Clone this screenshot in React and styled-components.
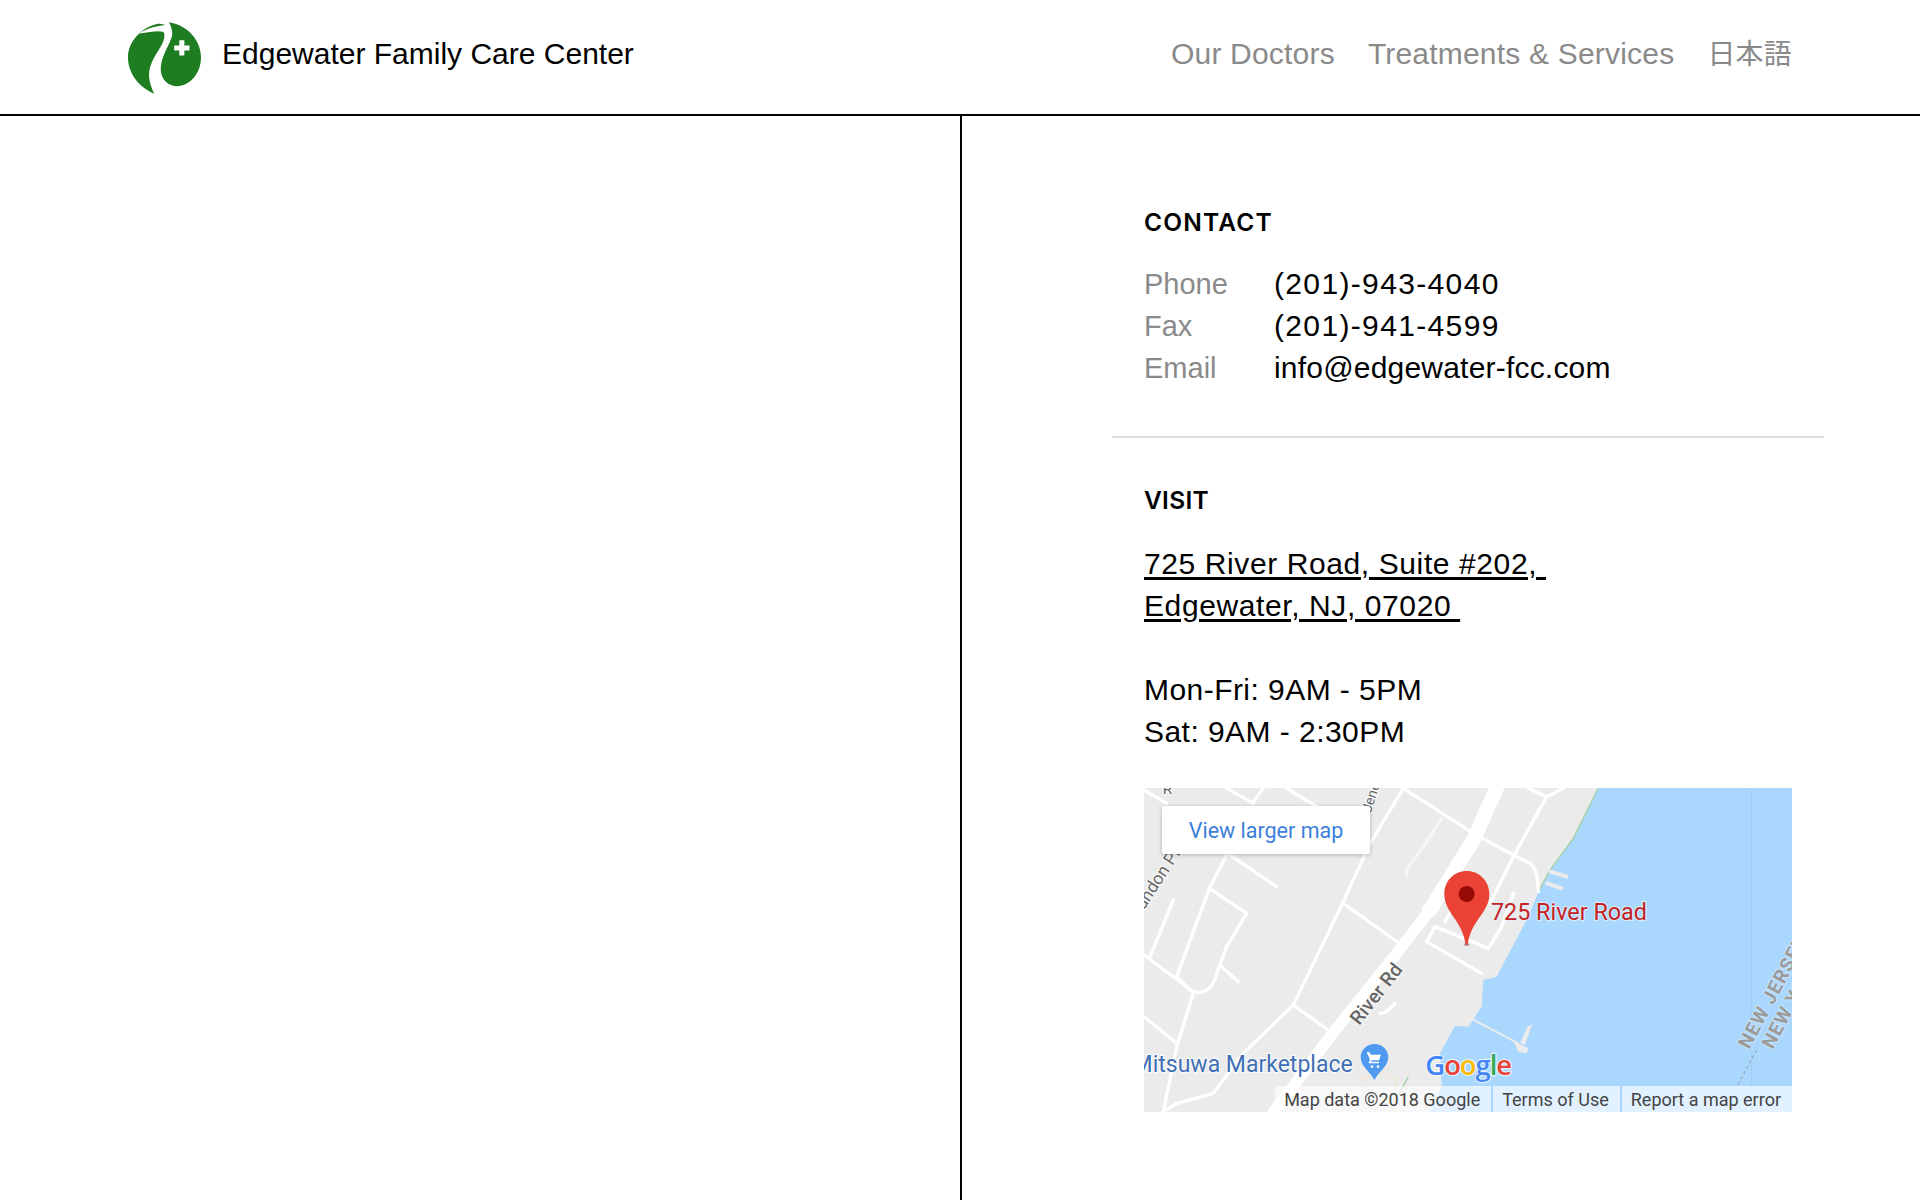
import React from "react";
import styled, { createGlobalStyle } from "styled-components";

const GlobalStyle = createGlobalStyle`
  html, body {
    margin: 0;
    padding: 0;
    background: #fff;
  }
  body {
    font-family: "Liberation Sans", "Noto Sans CJK JP", sans-serif;
    color: #000;
  }
`;

const Logo = () => (
  <LogoMark viewBox="25 22 215 210">
    <path
      fill="#1e7d20"
      d="M112 26C62 38 25 80 25 125C25 175 60 215 102 232C88 200 80 175 95 140C110 105 135 85 132 55C130 44 100 48 58 55C75 42 105 34 135 30C128 27 120 26 112 26Z"
    />
    <path
      fill="#1e7d20"
      d="M145 22C200 30 240 75 240 125C240 175 205 210 170 210C135 210 118 180 122 150C126 115 150 85 155 60C157 45 150 30 145 22Z"
    />
    <path fill="#fff" d="M176 75h15v15h15v15h-15v15h-15v-15h-15v-15h15z" />
  </LogoMark>
);

const MapRoad = styled.path`
  fill: none;
  stroke: ${(p) => p.$color || "#fff"};
  stroke-width: ${(p) => p.$w || 10};
  stroke-linejoin: round;
  stroke-linecap: round;
`;

const MapLabel = styled.text`
  font-family: Roboto, "Liberation Sans", sans-serif;
  font-size: ${(p) => p.$size || 45}px;
  font-weight: ${(p) => p.$weight || 400};
  letter-spacing: ${(p) => p.$spacing || 0}px;
  fill: ${(p) => p.$color || "#666"};
  stroke: ${(p) => p.$halo || "#fff"};
  stroke-width: 7px;
  stroke-opacity: 0.75;
  stroke-linejoin: round;
  paint-order: stroke;
`;

const GoogleLabel = styled.text`
  font-family: "Open Sans", Roboto, sans-serif;
  font-size: 82px;
  font-weight: 600;
  letter-spacing: -3px;
  stroke: #fff;
  stroke-opacity: 0.7;
  stroke-width: 7px;
  stroke-linejoin: round;
  paint-order: stroke;
`;

const roads = [
  "M42 60L110 100",
  "M290 55L370 100",
  "M370 95L400 55",
  "M470 55L560 110",
  "M820 55L1030 190L1150 255L1200 280C1215 290 1222 310 1225 365",
  "M820 55L720 220L640 395L490 705L340 850L250 970L140 1000L100 1025",
  "M640 400L815 525",
  "M490 705L615 795",
  "M300 255L440 350",
  "M290 255L240 350L140 620L190 670L140 830L100 1025",
  "M245 360L350 430L290 530L260 610C250 650 230 675 190 665L42 555",
  "M130 390L60 560",
  "M275 590L325 635",
  "M42 740L140 820",
  "M1195 55L1250 80L1300 55",
  "M1250 80L1150 260L1080 400",
  "M1075 535L915 470",
  "M1075 535L1115 470L1150 370",
  "M890 515L1055 610",
  "M890 515L915 470",
  "M880 415L905 400",
  "M945 455L970 410",
  "M750 730C770 730 780 715 795 700",
];

const CompanyMap = () => (
  <MapFrame>
    <MapArt viewBox="42 54 1944 972" preserveAspectRatio="none">
      <rect x="42" y="54" width="1944" height="972" fill="#ebebeb" />
      <path
        fill="#a9d7fe"
        d="M1405 54L1330 205L1260 300L1225 365L1195 440L1100 620L1060 630L1055 710L1015 770L975 768L930 850L935 950L900 1026L1986 1026L1986 54Z"
      />
      <path fill="none" stroke="#a5d0a5" strokeWidth="4" d="M1405 54L1330 205L1260 300L1225 365" />
      <path fill="none" stroke="#a5d0a5" strokeWidth="4" d="M835 920L800 985" />
      <path fill="none" stroke="#f1e6d8" strokeWidth="5" d="M690 930L760 905L800 930L790 1000" />
      {roads.map((d, index) => (
        <MapRoad key={index} d={d} />
      ))}
      <MapRoad d="M935 145L880 230L835 290L830 315" $color="#f6f6f6" />
      <MapRoad d="M1100 54L1030 210L900 420" $w={44} />
      <MapRoad d="M900 420L800 550L600 800L490 950L430 1026" $w={34} />
      <MapRoad d="M1262 305L1310 320M1252 340L1295 355" $color="#ebebeb" $w={12} />
      <MapRoad d="M1028 748L1165 820" $color="#ebebeb" $w={6} />
      <path fill="#ebebeb" d="M1150 812L1195 835L1190 850L1165 845ZM1170 820L1192 770L1207 762L1185 825Z" />
      <path fill="none" stroke="#9ec8ee" strokeWidth="2" d="M1865 54V1026" />
      <path fill="none" stroke="#9a9a9a" strokeWidth="3" strokeDasharray="10 8" d="M1880 840L1820 950" />
      <MapLabel x="1858" y="840" $size={58} $weight={700} $color="#9b9b9b" $spacing={3} transform="rotate(-62 1858 840)" $halo="#cfe6fb">
        NEW JERSEY
      </MapLabel>
      <MapLabel x="1928" y="840" $size={58} $weight={700} $color="#9b9b9b" $spacing={3} transform="rotate(-62 1928 840)" $halo="#cfe6fb">
        NEW YORK
      </MapLabel>
      <MapLabel x="98" y="72" $size={46}>R</MapLabel>
      <MapLabel x="15" y="462" $size={52} transform="rotate(-57 15 462)">
        Brandon Pl
      </MapLabel>
      <MapLabel x="722" y="130" $size={42} transform="rotate(-72 722 130)">
        Jene
      </MapLabel>
      <MapLabel x="688" y="768" $size={58} $weight={500} transform="rotate(-52 688 768)">
        River Rd
      </MapLabel>
      <MapLabel x="668" y="905" $size={69} $color="#3f6fb5" textAnchor="end">
        Mitsuwa Marketplace
      </MapLabel>
      <path
        fill="#4e9af1"
        d="M733 822C760 822 775 842 775 862C775 890 745 905 733 930C721 905 692 890 692 862C692 842 708 822 733 822Z"
      />
      <path
        fill="#fff"
        d="M711 847h8l3 7h31l-6 17h-22l-2 4h24v5h-32l5-10l-7-18h-2zM726 886a4 4 0 1 0 .1 0zM744 886a4 4 0 1 0 .1 0z"
      />
      <GoogleLabel x="886" y="915">
        <tspan fill="#4285f4">G</tspan>
        <tspan fill="#ea4335">o</tspan>
        <tspan fill="#fbbc05">o</tspan>
        <tspan fill="#4285f4">g</tspan>
        <tspan fill="#34a853">l</tspan>
        <tspan fill="#ea4335">e</tspan>
      </GoogleLabel>
      <ellipse cx="1010" cy="524" rx="9" ry="4" fill="#777" opacity="0.6" />
      <path
        fill="#ea4335"
        d="M1010 303C1048 303 1078 333 1078 372C1078 430 1022 450 1013 525H1007C998 450 943 430 943 372C943 333 972 303 1010 303Z"
      />
      <circle cx="1010" cy="372" r="24" fill="#960a05" />
      <MapLabel x="1083" y="449" $size={70} $color="#c5221f" $halo="#e3f1fe">
        725 River Road
      </MapLabel>
    </MapArt>
    <LargerMapCard>View larger map</LargerMapCard>
    <Attribution>
      <AttributionCell>Map data ©2018 Google</AttributionCell>
      <AttributionCell>Terms of Use</AttributionCell>
      <AttributionCell>Report a map error</AttributionCell>
    </Attribution>
  </MapFrame>
);

const App = () => (
  <Page>
    <GlobalStyle />
    <Header>
      <Brand>
        <Logo />
        <BrandName>Edgewater Family Care Center</BrandName>
      </Brand>
      <Nav>
        <NavLink>Our Doctors</NavLink>
        <NavLink>Treatments &amp; Services</NavLink>
        <NavLink $cjk>日本語</NavLink>
      </Nav>
    </Header>
    <Main>
      <Blank />
      <Details>
        <ContactSection>
          <Heading $spacing={1.2}>CONTACT</Heading>
          <ContactGrid>
            <ContactKey>Phone</ContactKey>
            <ContactValue $spacing={1.35}>(201)-943-4040</ContactValue>
            <ContactKey>Fax</ContactKey>
            <ContactValue $spacing={1.35}>(201)-941-4599</ContactValue>
            <ContactKey>Email</ContactKey>
            <ContactValue $spacing={0.2}>info@edgewater-fcc.com</ContactValue>
          </ContactGrid>
        </ContactSection>
        <VisitSection>
          <Heading $spacing={0.3}>VISIT</Heading>
          <Address>
            725 River Road, Suite #202,&nbsp;
            <br />
            Edgewater, NJ, 07020&nbsp;
          </Address>
          <Hours>
            Mon-Fri: 9AM - 5PM
            <br />
            Sat: 9AM - 2:30PM
          </Hours>
          <CompanyMap />
        </VisitSection>
      </Details>
    </Main>
  </Page>
);

const Page = styled.div`
  min-height: 100vh;
  display: flex;
  flex-direction: column;
  overflow: hidden;
`;

const Header = styled.header`
  height: 114px;
  box-sizing: content-box;
  border-bottom: 2px solid #000;
  padding: 0 128px;
  display: flex;
  align-items: center;
  justify-content: space-between;
`;

const Brand = styled.div`
  display: flex;
  align-items: center;
  gap: 21px;
`;

const LogoMark = styled.svg`
  width: 73px;
  height: 72px;
  margin-top: 1px;
`;

const BrandName = styled.div`
  font-size: 30px;
  line-height: 36px;
  margin-top: -6px;
`;

const Nav = styled.nav`
  display: flex;
  align-items: center;
  gap: 33px;
  margin-top: -6px;
`;

const NavLink = styled.a`
  font-size: ${(p) => (p.$cjk ? 28 : 30)}px;
  line-height: 36px;
  height: 36px;
  margin-top: ${(p) => (p.$cjk ? 2 : 0)}px;
  letter-spacing: 0.2px;
  color: #8a8a8a;
`;

const Main = styled.main`
  flex: 1;
  display: grid;
  grid-template-columns: 962px 1fr;
`;

const Blank = styled.div`
  border-right: 2px solid #000;
`;

const Details = styled.div`
  padding: 0 96px 0 150px;
`;

const ContactSection = styled.section`
  padding: 92px 32px 47px;
  border-bottom: 2px solid #dedede;
`;

const VisitSection = styled.section`
  padding: 48px 32px 0;
`;

const Heading = styled.h2`
  margin: 0 0 27px;
  font-family: Inter, "Liberation Sans", sans-serif;
  font-size: 24.5px;
  line-height: 28px;
  font-weight: 600;
  letter-spacing: ${(p) => p.$spacing}px;
`;

const ContactGrid = styled.div`
  display: grid;
  grid-template-columns: 130px 1fr;
  font-size: 30px;
  line-height: 42px;
`;

const ContactKey = styled.span`
  font-size: 29px;
  color: #8a8a8a;
`;

const ContactValue = styled.span`
  letter-spacing: ${(p) => p.$spacing}px;
`;

const Address = styled.a`
  display: block;
  padding-top: 2px;
  font-size: 30px;
  line-height: 42px;
  letter-spacing: 0.6px;
  color: #000;
  text-decoration: underline;
  text-underline-offset: 3px;
`;

const Hours = styled.p`
  margin: 42px 0 0;
  font-size: 30px;
  line-height: 42px;
  letter-spacing: 0.45px;
`;

const MapFrame = styled.div`
  position: relative;
  width: 648px;
  height: 324px;
  margin-top: 35px;
  overflow: hidden;
`;

const MapArt = styled.svg`
  display: block;
  width: 100%;
  height: 100%;
`;

const LargerMapCard = styled.a`
  position: absolute;
  left: 18px;
  top: 18px;
  width: 208px;
  height: 48px;
  display: flex;
  align-items: center;
  justify-content: center;
  background: #fff;
  border-radius: 2px;
  box-shadow: 0 1px 4px rgba(0, 0, 0, 0.25);
  font-family: Roboto, "Liberation Sans", sans-serif;
  font-size: 21.5px;
  color: #3b7fd9;
`;

const Attribution = styled.div`
  position: absolute;
  right: 0;
  bottom: 0;
  height: 26px;
  display: flex;
  gap: 2px;
  font-family: Roboto, "Liberation Sans", sans-serif;
  font-size: 18px;
  color: #444;
`;

const AttributionCell = styled.span`
  display: flex;
  align-items: center;
  padding: 0 11px 0 9px;
  background: rgba(255, 255, 255, 0.65);
  white-space: nowrap;
`;

export default App;
